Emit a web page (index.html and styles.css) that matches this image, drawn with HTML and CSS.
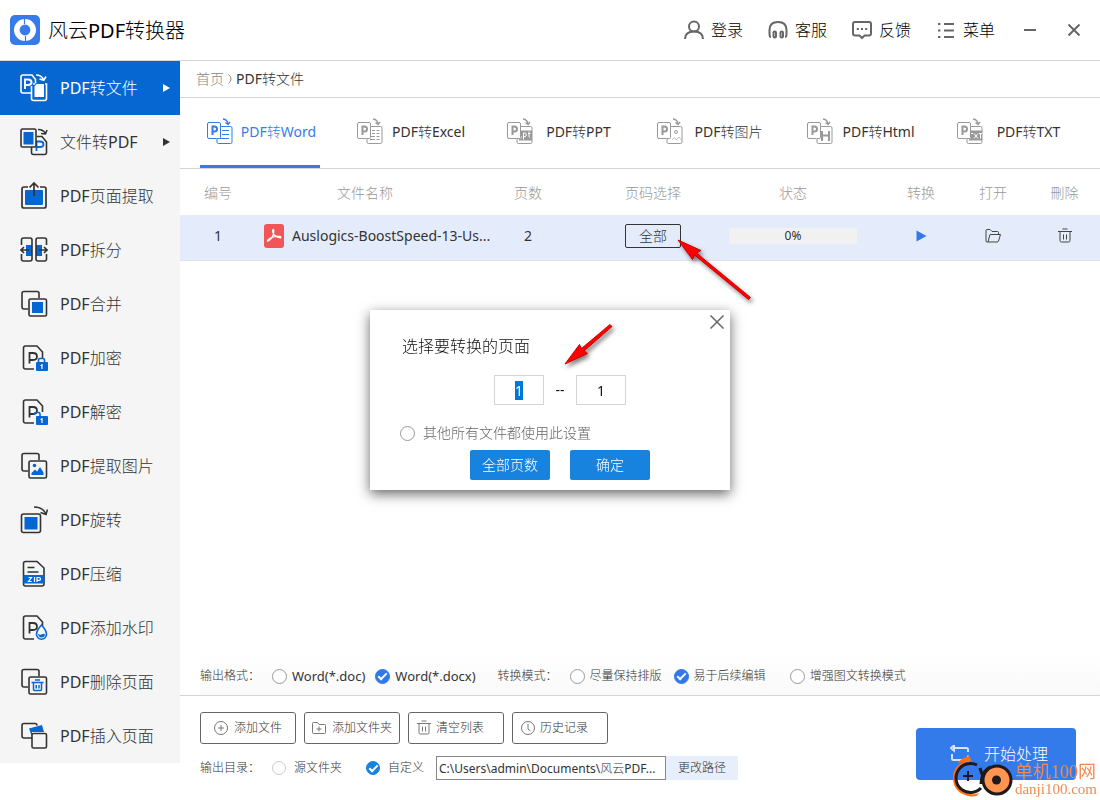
FILE: index.html
```html
<!DOCTYPE html>
<html lang="zh-CN">
<head>
<meta charset="utf-8">
<title>风云PDF转换器</title>
<link rel="stylesheet" href="styles.css">
</head>
<body>
<svg class="defs" aria-hidden="true">
  <symbol id="tab-base" viewBox="0 0 26 28">
    <g fill="none" stroke="currentColor">
      <path d="M9.500 20.500H2q-1.500 0-1.500-1.500V6q0-1.500 1.500-1.500h10q1.500 0 1.500 1.500v2.500"/>
      <path d="M13.500 8.500h10q1.500 0 1.500 1.500v14q0 1.500-1.500 1.500h-12q-1.500 0-1.500-1.500v-3.500h2.500q1 0 1-1z"/>
      <path d="M16 1q4.500.5 5 5M18.500 4.500l2.600 2 2-2.600" stroke-width="1.300"/>
      <path stroke-width="2" d="M5.500 17V8.500h2q2.500 0 2.500 2.500t-2.500 2.500h-2"/>
    </g>
  </symbol>
  <symbol id="page-p" viewBox="0 0 28 28">
    <path d="M14 25H5.500Q3.500 25 3.500 23V4q0-2 2-2H17l5.500 6v6" fill="none" stroke="#333" stroke-width="1.600"/>
    <path d="M9.500 19.500V9h3.500q4 0 4 3.500t-4 3.500h-3.500" fill="none" stroke="#333" stroke-width="1.800"/>
  </symbol>
  <symbol id="trash" viewBox="0 0 14 16">
    <path d="M0 3.500h14M4.500 1h5M2 3.500v9q0 1.500 1.500 1.500h7q1.500 0 1.500-1.500v-9M5.500 6.500v5M8.500 6.500v5" fill="none" stroke="currentColor"/>
  </symbol>
</svg>

<header class="titlebar">
  <svg class="logo" viewBox="0 0 30 30"><rect width="30" height="30" rx="5" fill="#377beb"/><circle cx="15" cy="15" r="8.200" fill="none" stroke="#fff" stroke-width="5.600"/><path d="M14.500 3v6M15.500 21v6" stroke="#377beb" stroke-width="1.200"/></svg>
  <h1 class="app-name">风云PDF转换器</h1>
  <nav class="top-menu">
    <button class="top-item"><svg viewBox="0 0 20 20"><circle cx="10" cy="6.500" r="5"/><path d="M1 19q0-7.500 9-7.500t9 7.500"/></svg>登录</button>
    <button class="top-item"><svg viewBox="0 0 20 20"><path d="M3 17Q1.500 17 1.500 14V10q0-8 8.500-8t8.500 8v4q0 3-1.500 3"/><rect x="5.500" y="11.500" width="2.500" height="6" rx="1.200"/><rect x="12.500" y="11.500" width="2.500" height="6" rx="1.200"/></svg>客服</button>
    <button class="top-item"><svg viewBox="0 0 20 20"><path d="M3 2h14q2 0 2 2v9.500q0 2-2 2h-4.500L10 18l-2.500-2.500H3q-2 0-2-2V4q0-2 2-2z"/><path d="M4.800 9h2M9 9h2M13.200 9h2"/></svg>反馈</button>
    <button class="top-item"><svg viewBox="0 0 20 20"><path d="M8 4h10M8 10.500h10M8 17h10M2 4h2.400M2 10.500h2.400M2 17h2.400"/></svg>菜单</button>
  </nav>
  <div class="window-buttons">
    <button aria-label="最小化"><svg viewBox="0 0 12 12"><path d="M0 6h12"/></svg></button>
    <button aria-label="关闭"><svg viewBox="0 0 12 12"><path d="M.5.5l11 11M11.500.5l-11 11"/></svg></button>
  </div>
</header>

<div class="workspace">
  <nav class="sidebar">
    <a href="#" class="side-item active"><svg viewBox="0 0 28 28"><g fill="none" stroke="#fff" stroke-width="1.600"><path d="M11 19H3q-2 0-2-2V3q0-2 2-2h9l3.500 4.500v4"/><path d="M13 10h2M25 10h1.500v14.500q0 2-2 2h-11q-2 0-2-2V12"/><path d="M16 1q5-.2 7.500 4.500M19.500 5l4.300 1.200L26 2.500"/><path stroke-width="2" d="M5 15V5.500h3q3.500 0 3.500 2.800t-3.500 2.800H5"/></g><path d="M16.500 10h7.500v13H14.500V12.500z" fill="#fff"/></svg><span>PDF转文件</span><i class="caret"></i></a>
    <a href="#" class="side-item"><svg viewBox="0 0 28 28"><path d="M17 8.500h5l4.500 5.500v10.500q0 2-2 2h-11q-2 0-2-2V19" fill="none" stroke="#333" stroke-width="1.600"/><path d="M16.500 23v-9.500H20q3.500 0 3.500 2.700T20 19h-3.500" fill="none" stroke="#0767d2" stroke-width="1.800"/><rect x="1" y="1" width="15" height="18" rx="1.500" fill="#f5f5f5" stroke="#333" stroke-width="1.600"/><path d="M3.500 4h10v12.500h-10z" fill="#0767d2"/><path d="M18 1.500q5-.2 7.500 4M21 5.500l4.500.5 1.500-4" fill="none" stroke="#333" stroke-width="1.600"/></svg><span>文件转PDF</span><i class="caret"></i></a>
    <a href="#" class="side-item"><svg viewBox="0 0 28 28"><g fill="none" stroke="#333" stroke-width="1.700"><path d="M8 5H4Q2 5 2 7v17q0 2 2 2h20q2 0 2-2V7q0-2-2-2h-4"/></g><rect x="5" y="8" width="18" height="15" rx="1" fill="#0767d2"/><path d="M14 14V2M9.500 5.500L14 1l4.500 4.500" fill="none" stroke="#333" stroke-width="1.700"/></svg><span>PDF页面提取</span></a>
    <a href="#" class="side-item"><svg viewBox="0 0 28 28"><path d="M6 9h6v11H6zM16 9h6v11h-6z" fill="#0767d2"/><g fill="none" stroke="#333" stroke-width="1.600"><path d="M1.500 9V4q0-2 2-2H10q2 0 2 2v19q0 2-2 2H3.500q-2 0-2-2v-5M26.500 9V4q0-2-2-2H18q-2 0-2 2v19q0 2 2 2h6.500q2 0 2-2v-5M1 14h8M4 11l-3 3 3 3M27 14h-8M24 11l3 3-3 3"/></g></svg><span>PDF拆分</span></a>
    <a href="#" class="side-item"><svg viewBox="0 0 28 28"><g fill="none" stroke="#333" stroke-width="1.600"><path d="M8 19H4q-2 0-2-2V3.500q0-2 2-2h13q2 0 2 2V8"/><rect x="9" y="9" width="17.500" height="17" rx="1.500"/></g><path d="M12 12h11v11H12z" fill="#0767d2"/></svg><span>PDF合并</span></a>
    <a href="#" class="side-item"><svg viewBox="0 0 28 28"><use href="#page-p"/><path d="M18.500 19v-3q0-1.500 1.500-1.500h3q1.500 0 1.500 1.500v3" fill="none" stroke="#0767d2" stroke-width="1.600"/><rect x="16" y="18" width="12" height="9" rx="1" fill="#0767d2"/><path d="M22 20v5M20.500 21.500H22" stroke="#fff" stroke-width="1.200"/></svg><span>PDF加密</span></a>
    <a href="#" class="side-item"><svg viewBox="0 0 28 28"><use href="#page-p"/><path d="M14.500 17v-1q0-1.500 1.500-1.500h2.500q1.500 0 1.500 1.500v3" fill="none" stroke="#0767d2" stroke-width="1.600"/><rect x="16" y="18" width="12" height="9" rx="1" fill="#0767d2"/><path d="M22 20v5M20.500 21.500H22" stroke="#fff" stroke-width="1.200"/></svg><span>PDF解密</span></a>
    <a href="#" class="side-item"><svg viewBox="0 0 28 28"><g fill="none" stroke="#333" stroke-width="1.600"><path d="M8 19H4q-2 0-2-2V3.500q0-2 2-2h13q2 0 2 2V8"/><rect x="9" y="9" width="17.500" height="17" rx="1.500"/></g><circle cx="14.500" cy="13.500" r="1.800" fill="#0767d2"/><path d="M11.500 23v-2l3.500-3.500 2 2 3-4.500 3.500 5.500V23z" fill="#0767d2"/></svg><span>PDF提取图片</span></a>
    <a href="#" class="side-item"><svg viewBox="0 0 28 28"><rect x="1.500" y="8" width="19" height="18.500" rx="2" fill="none" stroke="#333" stroke-width="1.600"/><path d="M4.500 11h13v12.500h-13z" fill="#0767d2"/><path d="M14 1q9 0 12 7M20.500 6.500L26 8.500l1.500-5" fill="none" stroke="#333" stroke-width="1.600"/></svg><span>PDF旋转</span></a>
    <a href="#" class="side-item"><svg viewBox="0 0 28 28"><path d="M5.500 1.500H17l7 6.500v16q0 2-2 2H5.500q-2 0-2-2V3.500q0-2 2-2zM7.500 7.500h7M7.500 12h11" fill="none" stroke="#333" stroke-width="1.600"/><path d="M3.500 15h21v8.500h-21z" fill="#0767d2"/><path d="M8.500 17.500h3l-3 4h3.200M14.500 17v5M17 22v-4.500h2q1.500 0 1.500 1.400T19 20.300h-2" fill="none" stroke="#fff" stroke-width="1.200"/></svg><span>PDF压缩</span></a>
    <a href="#" class="side-item"><svg viewBox="0 0 28 28"><use href="#page-p"/><path d="M21.500 11q5 5.500 5 9.200a5 5 0 0 1-10 0q0-3.700 5-9.200z" fill="#f5f5f5" stroke="#0767d2" stroke-width="1.600"/><path d="M18 19.500q2 2 4 .8t3 .2q-.5 3-3.500 3t-3.500-4z" fill="#0767d2"/></svg><span>PDF添加水印</span></a>
    <a href="#" class="side-item"><svg viewBox="0 0 28 28"><g fill="none" stroke="#333" stroke-width="1.600"><path d="M8 19H4q-2 0-2-2V3.500q0-2 2-2h13q2 0 2 2V8"/><rect x="9" y="9" width="17.500" height="17" rx="1.500"/></g><path d="M11.500 14.500h12M15 12h5M13.500 14.500v7q0 1 1 1h6q1 0 1-1v-7M16.200 17v3.500M19 17v3.500" fill="none" stroke="#0767d2" stroke-width="1.500"/></svg><span>PDF删除页面</span></a>
    <a href="#" class="side-item"><svg viewBox="0 0 28 28"><path d="M12 16H4q-2 0-2-2V3.500q0-2 2-2h11q2 0 2 2" fill="none" stroke="#333" stroke-width="1.600"/><path d="M9 6.500l13-3.500 2 7H12v5z" fill="#0767d2"/><rect x="12" y="11.500" width="14.500" height="14.500" rx="1.500" fill="#f5f5f5" stroke="#333" stroke-width="1.600"/></svg><span>PDF插入页面</span></a>
  </nav>

  <main class="content">
    <div class="breadcrumb"><a href="#">首页</a><svg viewBox="0 0 4 10"><path d="M.5.5q2.500 2 2.500 4.500T.5 9.500" fill="none" stroke="#888"/></svg><span>PDF转文件</span></div>

    <nav class="tabs">
      <a href="#" class="tab active"><svg viewBox="0 0 26 28"><use href="#tab-base"/><path d="M15 12.500h7M15 16.500h7M13 20.500h9" stroke="currentColor"/></svg><span>PDF转Word</span></a>
      <a href="#" class="tab"><svg viewBox="0 0 26 28"><use href="#tab-base"/><path d="M15 12.500h3M19.500 12.500h3M15 15.500h3M19.500 15.500h3M14 18.500h4M19.500 18.500h3M13 21.500h5M19.500 21.500h3" stroke="currentColor"/></svg><span>PDF转Excel</span></a>
      <a href="#" class="tab"><svg viewBox="0 0 26 28"><use href="#tab-base"/><path d="M14 12.500h11v10H12v-2h2z" fill="currentColor"/><path d="M14 19h1M16.500 21.500V15h1.500q1.300 0 1.300 1.800T18 18.500h-1.500M22 13.500v5q0 .8 1.200.8M21 15.500h2.500" fill="none" stroke="#fff"/></svg><span>PDF转PPT</span></a>
      <a href="#" class="tab"><svg viewBox="0 0 26 28"><use href="#tab-base"/><circle cx="19" cy="14" r="1.500" fill="none" stroke="currentColor"/><path d="M15 22l2.500-2.500 2 2.500 2.500-3 2.500 3" fill="none" stroke="currentColor" opacity=".6"/></svg><span>PDF转图片</span></a>
      <a href="#" class="tab"><svg viewBox="0 0 26 28"><use href="#tab-base"/><path d="M15 13v10M22 13v10M15 17.500h7" stroke="currentColor" stroke-width="2"/></svg><span>PDF转Html</span></a>
      <a href="#" class="tab"><svg viewBox="0 0 26 28"><use href="#tab-base"/><path d="M14 12.500h11v10H12v-2h2z" fill="currentColor"/><path d="M14 15.500h2M17 15.500l4 5M21 15.500l-4 5M22 15.500h3M23.500 15.500v5" fill="none" stroke="#fff"/></svg><span>PDF转TXT</span></a>
    </nav>

    <section class="file-area">
      <table class="files">
        <colgroup><col class="c-no"><col><col class="c-pages"><col class="c-range"><col class="c-state"><col class="c-convert"><col class="c-act"><col class="c-last"></colgroup>
        <thead><tr><th>编号</th><th>文件名称</th><th>页数</th><th>页码选择</th><th>状态</th><th class="convert">转换</th><th>打开</th><th>刪除</th></tr></thead>
        <tbody><tr>
          <td>1</td>
          <td class="name"><div class="file-name"><svg viewBox="0 0 20 24"><rect width="20" height="24" rx="3" fill="#f15557"/><path d="M9.500 5.500q-1.300.2-.7 2.500 1.200 5 7.700 5.800 1-1-.8-1.300-7.200-1-12 3.700-.8 1.300.6.800Q9 14 9.800 8q.3-2.300-.3-2.500z" fill="none" stroke="#fff" stroke-width="1.300"/></svg><span>Auslogics-BoostSpeed-13-Us...</span></div></td>
          <td>2</td>
          <td><button class="range-btn">全部</button></td>
          <td><div class="progress">0%</div></td>
          <td class="convert"><button class="icon-btn play" aria-label="转换"><svg viewBox="0 0 16 16"><path d="M3.500 2.500l10 5.500-10 5.500z" fill="#3079ed"/></svg></button></td>
          <td><button class="icon-btn" aria-label="打开"><svg viewBox="0 0 16 16"><path d="M3 14H2q-1 0-1-1V2.500q0-1 1-1h3l2 2h5.500q1 0 1 1V6M3 14l2-7.500h10.500L13.500 13q-.3 1-1.500 1z" fill="none" stroke="#444"/></svg></button></td>
          <td><button class="icon-btn" aria-label="刪除"><svg viewBox="0 0 14 16"><use href="#trash"/></svg></button></td>
        </tr></tbody>
      </table>
    </section>

    <section class="options">
      <fieldset class="format"><span class="caption">输出格式：</span>
        <label><input type="radio" name="format">Word(*.doc)</label>
        <label><input type="radio" name="format" checked>Word(*.docx)</label>
      </fieldset>
      <fieldset><span class="caption">转换模式：</span>
        <label><input type="radio" name="mode">尽量保持排版</label>
        <label class="wide-after"><input type="radio" name="mode" checked>易于后续编辑</label>
        <label><input type="radio" name="mode">增强图文转换模式</label>
      </fieldset>
    </section>

    <footer class="bottom">
      <div class="bottom-left">
        <div class="actions">
          <button><svg viewBox="0 0 14 14"><circle cx="7" cy="7" r="6.500"/><path d="M4 7h6M7 4v6"/></svg>添加文件</button>
          <button><svg viewBox="0 0 14 14"><path d="M1.500 12.500q-1 0-1-1v-9q0-1 1-1h4l1.500 2h5.500q1 0 1 1v7q0 1-1 1zM4.500 8h5M7 5.500v5"/></svg>添加文件夹</button>
          <button class="start-aligned"><svg viewBox="0 0 14 16"><use href="#trash"/></svg>清空列表</button>
          <button class="start-aligned"><svg viewBox="0 0 14 14"><circle cx="7" cy="7" r="6.500"/><path d="M7 3v5l2.500 2"/></svg>历史记录</button>
        </div>
        <div class="output">
          <span class="caption">输出目录：</span>
          <label class="source"><input type="radio" name="dir">源文件夹</label>
          <label class="custom"><input type="radio" name="dir" checked>自定义</label>
          <input class="path" type="text" aria-label="输出目录" readonly value="C:\Users\admin\Documents\风云PDF...">
          <button class="change">更改路径</button>
        </div>
      </div>
      <button class="start"><svg viewBox="0 0 20 18"><path d="M4 3h12.500q1.500 0 1.500 1.500V7M4 .5v5L1 3zM2 9v4.500q0 1.500 1.500 1.500H14M18 10.500v6"/></svg>开始处理</button>
    </footer>
  </main>
</div>

<dialog class="page-dialog" open>
  <button class="dialog-close" aria-label="关闭"><svg viewBox="0 0 14 14"><path d="M.5.5l13 13M13.500.5l-13 13"/></svg></button>
  <h2>选择要转换的页面</h2>
  <div class="range">
    <input id="from" type="text" value="1" aria-label="起始页">
    <span>--</span>
    <input type="text" value="1" aria-label="结束页">
  </div>
  <label class="apply"><input type="radio" name="apply">其他所有文件都使用此设置</label>
  <div class="dialog-buttons"><button>全部页数</button><button>确定</button></div>
</dialog>

<svg class="arrow arrow-range" viewBox="0 0 80 70"><path d="M1 2L24 12.500 19.500 15 73.500 59.500 71.500 61.500 17.500 17 15.500 21.500z"/></svg>
<svg class="arrow arrow-dialog" viewBox="0 0 60 50"><path d="M5 42L19.500 22.500 21.500 26.500 50 2.500 52 4.500 24 29 27.500 31.500z"/></svg>

<div class="watermark">
  <svg viewBox="0 0 64 44"><path d="M17 4q-14 5-14 18 0 14 15 18 9 2 11-3-4 2-9 1Q7 35 7 22 7 11 20 4z" fill="#ff6f13"/><path d="M8 6q4-4 11-6l3 5q-6-1-13 2z" fill="#ff6f13"/><path d="M27 9A14.500 14.500 0 1 0 31 32M30 12q3 11 8 15M41 11q-9 3-10 17" fill="none" stroke="#201a1d" stroke-width="3"/><path d="M13 20h10M18 15v10" stroke="#201a1d" stroke-width="2"/><circle cx="47" cy="24" r="14" fill="#ff9550" stroke="#201a1d" stroke-width="3"/><circle cx="46.500" cy="24" r="4.500" fill="#201a1d"/></svg>
  <div class="wm-text"><strong>单机100网</strong><span>danji100.com</span></div>
</div>
<script src="app.js"></script>
</body>
</html>
```

FILE: styles.css
```css
* { box-sizing: border-box; }

body {
  margin: 0;
  min-height: 100vh;
  display: flex;
  flex-direction: column;
  background: #fff;
  color: #333;
  font: 14px/20px "Noto Sans", "Noto Sans CJK SC Light", "Noto Sans CJK SC", sans-serif;
}

button, input { font: inherit; color: inherit; }
button { border: 0; padding: 0; background: none; white-space: nowrap; }
a { color: inherit; text-decoration: none; }
h1, h2 { margin: 0; font-weight: inherit; }
svg { flex: none; display: block; }
.defs { position: absolute; width: 0; height: 0; }

/* Title bar */
.titlebar {
  height: 61px;
  display: flex;
  align-items: center;
  padding: 0 20px 0 10px;
  border-bottom: 1px solid #d5d5d5;
  color: #000;
}
.logo { width: 30px; height: 30px; margin-right: 8px; }
.app-name { padding-top: 2px; font-size: 20px; line-height: 30px; }
.top-menu { margin-left: auto; display: flex; gap: 25px; font-size: 16px; line-height: 24px; }
.top-item { display: flex; align-items: center; gap: 7px; }
.top-item svg { width: 20px; height: 20px; fill: none; stroke: #666; stroke-width: 2; }
.window-buttons { display: flex; gap: 32px; margin-left: 29px; }
.window-buttons svg { width: 12px; height: 12px; stroke: #666; stroke-width: 2; }

.workspace { flex: 1; display: flex; }

/* Sidebar */
.sidebar { width: 180px; flex: none; align-self: flex-start; background: #f5f5f5; font-size: 16px; }
.side-item { height: 54px; display: flex; align-items: center; gap: 12px; padding: 0 10px 0 20px; }
.side-item svg { width: 28px; height: 28px; }
.side-item.active { background: #0767d2; color: #fff; }
.caret { margin-left: auto; border: 4px solid transparent; border-left: 7px solid currentColor; border-right: 0; }

/* Main column */
.content { flex: 1; min-width: 0; display: flex; flex-direction: column; }
.breadcrumb {
  height: 37px;
  display: flex;
  align-items: center;
  gap: 4px;
  padding-left: 16px;
  border-bottom: 1px solid #d5d5d5;
}
.breadcrumb a { color: #888; }
.breadcrumb svg { width: 4px; height: 10px; }

.tabs { height: 71px; display: flex; gap: 30px; padding-left: 20px; border-bottom: 1px solid #d5d5d5; }
.tab { width: 120px; display: flex; align-items: center; padding-left: 7px; border-bottom: 3px solid transparent; }
.tab svg { width: 26px; height: 28px; color: #999; }
.tab span { flex: 1; padding-left: 4px; text-align: center; white-space: nowrap; }
.tab.active { border-color: #377beb; color: #377beb; }
.tab.active svg { color: #377beb; }

.file-area { flex: 1; }
.files { width: 100%; table-layout: fixed; border-collapse: collapse; text-align: center; }
.files th { height: 46px; padding: 2px 0 0; font-weight: inherit; color: #999; }
.files td { height: 45px; padding: 0 0 2px; }
.files tbody tr { background: #e4ecfb; border-bottom: 1px solid #dfe2e8; }
.files .convert { padding-left: 23px; }
.c-no { width: 76px; }
.c-pages { width: 108px; }
.c-range { width: 142px; }
.c-state { width: 138px; }
.c-convert { width: 95px; }
.c-act { width: 72px; }
.c-last { width: 71px; }
.file-name { display: flex; align-items: center; gap: 8px; padding-left: 8px; white-space: nowrap; }
.file-name svg { width: 20px; height: 24px; }
.range-btn { width: 56px; height: 24px; border: 1px solid #333; border-radius: 2px; display: block; margin: 0 auto; }
.progress { width: 128px; height: 16px; margin: 0 auto; border-radius: 2px; background: #f1f1f1; font-size: 12px; line-height: 16px; }
.icon-btn { display: block; margin: 0 auto; color: #444; }
.icon-btn svg { width: 16px; height: 16px; }

/* Radios */
input[type="radio"] {
  appearance: none;
  flex: none;
  position: relative;
  width: 15px;
  height: 15px;
  margin: 0;
  border: 1px solid #999;
  border-radius: 50%;
  background: #fff;
}
input[type="radio"]:checked { border-color: #3079ed; background: #3079ed; }
input[type="radio"]:checked::after {
  content: "";
  box-sizing: border-box;
  position: absolute;
  left: 2px;
  top: 3px;
  width: 9px;
  height: 5px;
  border: solid #fff;
  border-width: 0 0 2px 2px;
  transform: rotate(-45deg);
}
label { display: flex; align-items: center; gap: 5px; white-space: nowrap; }

/* Output options */
.options {
  display: flex;
  height: 40px;
  margin-left: 20px;
  gap: 22px;
  background: linear-gradient(#fff, #f9f9f9);
  font-size: 12px;
}
.options fieldset { display: flex; align-items: center; gap: 12px; border: 0; margin: 0; padding: 2px 0 0; min-width: 0; }
.caption { width: 60px; white-space: nowrap; }
.options .wide-after { margin-right: 12px; }
.options .format { gap: 10px; font-size: 13px; }
.options .format .caption { width: 62px; font-size: 12px; }

/* Bottom bar */
.bottom {
  display: flex;
  justify-content: space-between;
  align-items: flex-end;
  padding: 16px 24px 20px 20px;
  border-top: 1px solid #d5d5d5;
  font-size: 12px;
}
.actions { display: flex; gap: 8px; }
.actions button {
  width: 96px;
  height: 32px;
  display: flex;
  align-items: center;
  justify-content: center;
  gap: 6px;
  border: 1px solid #666;
  border-radius: 3px;
}
.actions .start-aligned { justify-content: flex-start; padding-left: 8px; gap: 5px; }
.actions svg { width: 14px; height: 16px; fill: none; stroke: #777; color: #777; }
.output { display: flex; align-items: center; margin-top: 12px; }
.output .caption { width: 72px; }
.output label { gap: 8px; }
.output label input { width: 14px; height: 14px; }
.output .source { margin-right: 24px; }
.output .source input { border-color: #ccc; }
.output .custom { margin-right: 12px; }
.output .custom input:checked { border-color: #1883de; background: #1883de; }
.path { width: 230px; height: 24px; padding: 0 2px; border: 1px solid #888; background: #fff; }
.change { width: 72px; height: 24px; background: #e8effc; }
.start {
  width: 160px;
  height: 52px;
  display: flex;
  align-items: center;
  justify-content: center;
  gap: 14px;
  padding-left: 6px;
  border-radius: 4px;
  background: #337aeb;
  color: #fff;
  font-size: 16px;
  line-height: 18px;
}
.start svg { width: 20px; height: 18px; fill: none; stroke: #d6e4fb; stroke-width: 2; }

/* Page range dialog */
.page-dialog {
  position: fixed;
  inset: 0;
  margin: auto;
  width: 360px;
  height: 180px;
  padding: 25px 30px 10px;
  border: 0;
  background: #fff;
  color: #333;
  box-shadow: 0 4px 12px rgba(0, 0, 0, .6);
}
.dialog-close { position: absolute; top: 5px; right: 6px; }
.dialog-close svg { width: 14px; height: 14px; stroke: #666; stroke-width: 1.5; }
.page-dialog h2 { padding-left: 2px; font-size: 16px; line-height: 22px; color: #111; }
.range { display: flex; justify-content: center; gap: 10px; margin-top: 18px; line-height: 30px; padding-left: 20px; color: #111; }
.range span { width: 12px; text-align: center; }
.range input { width: 50px; height: 30px; border: 1px solid #d5d5d5; padding: 4px 0; line-height: 20px; text-align: center; outline: 0; }
.range input::selection { background: #0078d7; color: #fff; }
.apply { margin-top: 17px; height: 22px; gap: 8px; color: #666; }
.dialog-buttons { display: flex; justify-content: center; gap: 20px; margin-top: 6px; padding-left: 20px; }
.dialog-buttons button { width: 80px; height: 30px; border-radius: 2px; background: #1883de; color: #fff; }

/* Pointer arrows over the window */
.arrow { position: absolute; fill: #f00; stroke: #c00; stroke-width: 1; filter: drop-shadow(2px 3px 2px rgba(0, 0, 0, .5)); }
.arrow-range { left: 677px; top: 238px; width: 80px; height: 70px; }
.arrow-dialog { left: 560px; top: 322px; width: 60px; height: 50px; }

.watermark { position: fixed; right: 3px; bottom: 0; display: flex; align-items: flex-end; gap: 1px; color: #f58a4f; font: 400 15px/17px "Liberation Serif", "Noto Sans CJK SC", serif; }
.watermark svg { width: 64px; height: 44px; }
.wm-text { display: flex; flex-direction: column; padding-bottom: 2px; }
.wm-text strong { font-size: 18px; line-height: 18px; font-weight: 400; }
```

FILE: app.js
```js
const from = document.getElementById("from");
from.focus();
from.select();
```
